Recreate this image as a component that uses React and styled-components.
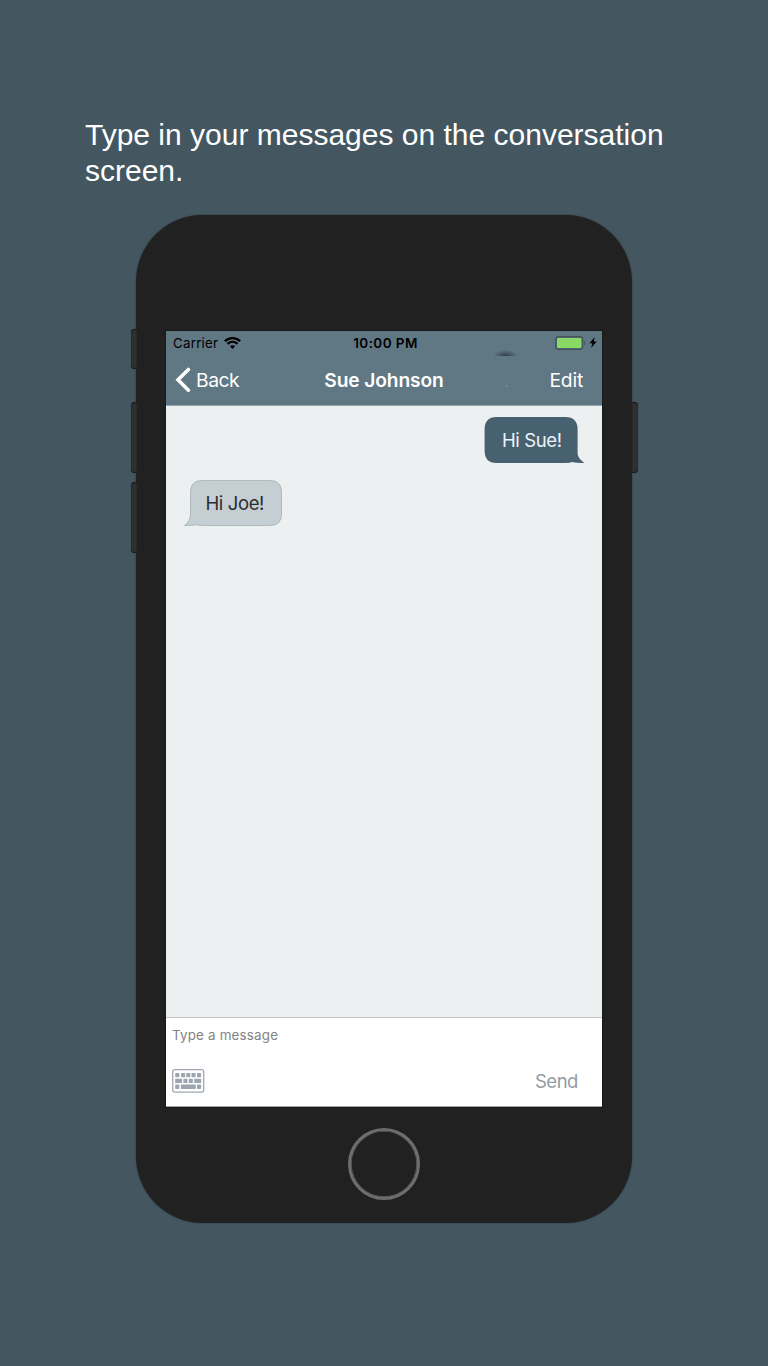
import React from "react";
import styled, { createGlobalStyle } from "styled-components";

const GlobalStyle = createGlobalStyle`
  *, *::before, *::after { box-sizing: border-box; }
  body { margin: 0; background: #445761; }
`;

const Page = styled.main`
  display: flex;
  flex-direction: column;
  align-items: center;
  width: 768px;
  height: 1366px;
  padding-top: 117px;
  background: #445761;
  font-family: Inter, "Liberation Sans", sans-serif;
`;

const Headline = styled.h1`
  width: 598px;
  height: 72px;
  margin: 0 0 26px;
  font: 400 30px/36px "Liberation Sans", Arial, sans-serif;
  color: #fff;
`;

const Phone = styled.section`
  position: relative;
  display: flex;
  flex-direction: column;
  align-items: center;
  width: 496px;
  height: 1008px;
  padding-top: 116px;
  border-radius: 67px;
  background: #212121;
  box-shadow: 0 0 2px rgba(20, 25, 28, 0.6);
`;

const SideButton = styled.span`
  position: absolute;
  top: ${(p) => p.$top}px;
  ${(p) => p.$side}: ${(p) => (p.$side === "left" ? -5 : -5.5)}px;
  width: 6px;
  height: ${(p) => p.$height}px;
  border-radius: ${(p) => (p.$side === "left" ? "4px 0 0 4px" : "0 4px 4px 0")};
  background: #303030;
  box-shadow: inset 0 1px 1px #1b1b1b, inset 0 -1px 1px #1b1b1b, 0 0 1px #20282c;
`;

const Screen = styled.div`
  display: flex;
  flex-direction: column;
  width: 436px;
  height: 776px;
  background: #edf0f1;
  border-bottom: 1px solid #a5a5a5;
  outline: 1px solid #191919;
`;

const Header = styled.header`
  height: 75px;
  background: #607784;
  border-bottom: 1px solid #98a4ac;
`;

const StatusBar = styled.div`
  position: relative;
  display: grid;
  grid-template-columns: 1fr auto 1fr;
  align-items: center;
  height: 25px;
  padding: 0 5px 2px 7px;
  overflow: hidden;
  color: #000;
`;

const Smudge = styled.span`
  position: absolute;
  left: 327px;
  top: 19px;
  width: 25px;
  height: 12px;
  background: radial-gradient(closest-side, rgba(32, 42, 48, 0.75), transparent);
`;

const Speck = styled.span`
  position: absolute;
  left: ${(p) => p.$x}px;
  top: ${(p) => p.$y}px;
  width: 1px;
  height: 2px;
  background: rgba(255, 255, 255, ${(p) => p.$strength});
`;

const Carrier = styled.div`
  display: flex;
  align-items: center;
  gap: 6px;
  font-size: 13.3px;
  line-height: 22px;
  letter-spacing: 0.25px;
`;

const Clock = styled.time`
  font-size: 13.5px;
  font-weight: 600;
  line-height: 22px;
  letter-spacing: 0.4px;
  transform: translateX(0.5px);
`;

const Power = styled.div`
  display: flex;
  align-items: center;
  justify-content: flex-end;
  gap: 2px;
`;

const NavBar = styled.nav`
  position: relative;
  display: grid;
  grid-template-columns: 1fr auto 1fr;
  align-items: center;
  height: 48px;
  padding: 0 19px 0 9px;
  color: #fff;
`;

const NavButton = styled.button`
  display: flex;
  align-items: center;
  justify-self: ${(p) => p.$align};
  gap: 5px;
  padding: 0;
  border: 0;
  background: none;
  color: #fff;
  font: 400 19.3px/24px Inter, sans-serif;
  letter-spacing: ${(p) => (p.$align === "start" ? -0.45 : -0.2)}px;
`;

const ContactName = styled.h2`
  margin: 0;
  font-size: 19.2px;
  font-weight: 600;
  line-height: 24px;
  letter-spacing: -0.12px;
  transform: translateX(5px);
`;

const Conversation = styled.div`
  display: flex;
  flex: 1;
  flex-direction: column;
  gap: 17px;
  padding: 11px 18px 0;
`;

const Bubble = styled.div`
  position: relative;
  display: flex;
  align-self: ${(p) => (p.$sent ? "flex-end" : "flex-start")};
  align-items: center;
  width: 100px;
  height: 46px;
  padding-left: ${(p) => (p.$sent ? 18 : 21.5)}px;
  font-size: 18.5px;
  letter-spacing: -0.38px;
  white-space: nowrap;
  color: ${(p) => (p.$sent ? "#edf3f7" : "#292d2f")};
`;

const BubbleShape = styled.svg`
  position: absolute;
  inset: 0;
  overflow: visible;
`;

const BubbleText = styled.span`
  position: relative;
`;

const Composer = styled.footer`
  display: flex;
  flex-direction: column;
  justify-content: space-between;
  height: 89px;
  padding: 8px 24px 12px 6px;
  border-top: 1px solid #c3c6c8;
  background: #fff;
`;

const Placeholder = styled.label`
  font-size: 13.4px;
  line-height: 18px;
  letter-spacing: 0.18px;
  color: #838383;
`;

const ComposerActions = styled.div`
  display: flex;
  align-items: center;
  justify-content: space-between;
  height: 26px;
`;

const SendButton = styled.button`
  padding: 0;
  border: 0;
  background: none;
  color: #939ca5;
  font: 400 18.5px/24px Inter, sans-serif;
  letter-spacing: -0.45px;
`;

const HomeButton = styled.div`
  width: 72px;
  height: 72px;
  margin-top: 21px;
  border: 3px solid #6d6d6d;
  border-radius: 50%;
  box-shadow: inset 0 0 0 0.6px #6d6d6d;
`;

const WifiIcon = () => (
  <svg width="17" height="12" viewBox="0 0 17 12" fill="none" stroke="currentColor" strokeWidth="2.3">
    <path d="M.8 4.1C5.1.1 11.9.1 16.2 4.1" />
    <path d="M3.5 6.9c2.9-2.7 7.1-2.7 10 0" />
    <path d="M5.9 9.2 8.5 12l2.6-2.8C9.7 7.9 7.3 7.9 5.9 9.2Z" fill="currentColor" stroke="none" />
  </svg>
);

const BatteryIcon = () => (
  <svg width="32" height="14" viewBox="0 0 32 14">
    <rect x=".9" y=".8" width="26.6" height="12.4" rx="2.7" fill="none" stroke="#43545f" strokeWidth="1.5" />
    <rect x="2" y="2" width="24.4" height="10" rx="1" fill="#8ad966" />
    <path d="M29 4.7q2.6 2.3 0 4.6Z" fill="#43545f" />
  </svg>
);

const ChargeIcon = () => (
  <svg width="8" height="11" viewBox="0 0 8 11">
    <path d="M5.8 0 .4 6.3h2.9L2.1 11 7.7 4.4H4.7Z" fill="#000" />
  </svg>
);

const BackIcon = () => (
  <svg width="16" height="26" viewBox="0 0 16 26">
    <path d="M13.4 2.5 3 12.8l10.4 10.4" fill="none" stroke="#fff" strokeWidth="3.6" strokeLinecap="round" />
  </svg>
);

const keyRows = [
  [[3.2, 4.1], [9, 4.2], [14.3, 4.1], [19.5, 4.1], [25, 4.1]],
  [[3.2, 6.9], [11.4, 4.1], [16.8, 4.1], [22.2, 7]],
  [[3.2, 4.1], [8.8, 15], [25, 4.1]],
];

const KeyboardIcon = () => (
  <svg width="33" height="24" viewBox="0 0 33 24">
    <rect x=".7" y=".7" width="31" height="22.4" rx="2" fill="none" stroke="#a0a8b2" strokeWidth="1.3" />
    {keyRows.map((row, r) =>
      row.map(([x, w]) => (
        <rect key={`${r}-${x}`} x={x} y={4 + r * 5.8} width={w} height="4.3" rx=".7" fill="#9da6b0" />
      ))
    )}
  </svg>
);

const SentShape = () => (
  <BubbleShape width="100" height="46" viewBox="0 0 100 46">
    <path
      d="M12.5 0H81.5Q93.6 0 93.6 12.5V37C94.2 40.5 96.5 43 100.3 46C95 46 91 45.8 88 45Q86 46 81.5 46H12.5Q.6 46 .6 33.5V12.5Q.6 0 12.5 0Z"
      fill="#486170"
    />
  </BubbleShape>
);

const ReceivedShape = () => (
  <BubbleShape width="100" height="46" viewBox="0 0 100 46">
    <path
      d="M18 .5H86Q97.5 .5 97.5 12V34Q97.5 45.5 86 45.5H18Q15 45.5 13 44.7C9 45.5 4 45.5 .5 45.5Q6.5 41 6.5 34V12Q6.5 .5 18 .5Z"
      fill="#c5cfd3"
      stroke="#afbabf"
    />
  </BubbleShape>
);

const messages = [
  { sent: true, text: "Hi Sue!" },
  { sent: false, text: "Hi Joe!" },
];

export default function App() {
  return (
    <>
      <GlobalStyle />
      <Page>
        <Headline>Type in your messages on the conversation screen.</Headline>
        <Phone>
          <SideButton $side="left" $top={114} $height={40} />
          <SideButton $side="left" $top={187} $height={71} />
          <SideButton $side="left" $top={267} $height={71} />
          <SideButton $side="right" $top={187} $height={71} />
          <Screen>
            <Header>
              <StatusBar>
                <Smudge />
                <Carrier>Carrier <WifiIcon /></Carrier>
                <Clock>10:00 PM</Clock>
                <Power><BatteryIcon /><ChargeIcon /></Power>
              </StatusBar>
              <NavBar>
                <NavButton $align="start"><BackIcon />Back</NavButton>
                <ContactName>Sue Johnson</ContactName>
                <NavButton $align="end">Edit</NavButton>
                <Speck $x={340} $y={29} $strength={0.25} />
                <Speck $x={367} $y={17} $strength={0.12} />
              </NavBar>
            </Header>
            <Conversation>
              {messages.map(({ sent, text }) => (
                <Bubble key={text} $sent={sent}>
                  {sent ? <SentShape /> : <ReceivedShape />}
                  <BubbleText>{text}</BubbleText>
                </Bubble>
              ))}
            </Conversation>
            <Composer>
              <Placeholder>Type a message</Placeholder>
              <ComposerActions>
                <KeyboardIcon />
                <SendButton>Send</SendButton>
              </ComposerActions>
            </Composer>
          </Screen>
          <HomeButton />
        </Phone>
      </Page>
    </>
  );
}
